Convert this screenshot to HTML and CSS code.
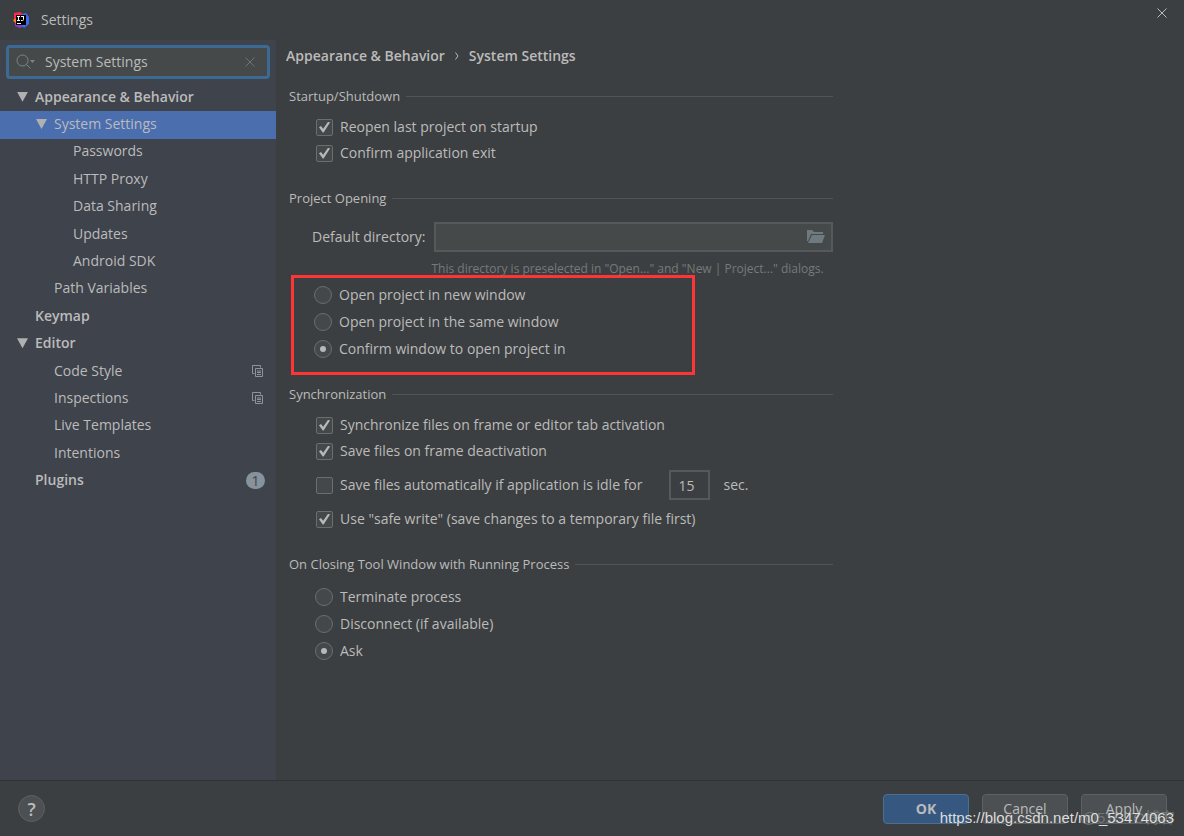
FILE: index.html
```html
<!DOCTYPE html>
<html lang="en">
<head>
<meta charset="utf-8">
<title>Settings</title>
<link rel="stylesheet" href="styles.css">
</head>
<body>
<div class="window">
  <header class="titlebar">
    <svg class="logo" viewBox="0 0 16 16" aria-hidden="true">
      <path fill="#fe2857" d="M1 1 7 0l4 3-3 9-7-2z"/>
      <path fill="#fc801d" d="M0 8l4-2 3 4-4 2z"/>
      <path fill="#9039d0" d="M2 11l6-2 4 4-5 3-5-2z"/>
      <path fill="#3c6cf0" d="M9 2l4-1 3 4v7l-5 4-3-3z"/>
      <path fill="#000" d="M3 3h10v10H3z"/>
      <path stroke="#fff" fill="none" d="M4 4.500h3M5.500 4.500v4M4 8.500h3M8 4.500h3M10.500 4.500v3q0 1-1 1H8M4 11.500h4"/>
    </svg>
    <h1 class="title">Settings</h1>
    <button class="close" aria-label="Close"><svg viewBox="0 0 10 10"><path d="M.5.5l9 9M9.500.5l-9 9"/></svg></button>
  </header>
  <div class="body">
    <aside class="sidebar">
      <div class="search">
        <svg class="search-icon" viewBox="0 0 20 16" aria-hidden="true"><circle cx="6.500" cy="6.500" r="5.500"/><path d="M10.500 10.500l4 4"/><path class="solid" d="M14 6h5l-2.500 3z"/></svg>
        <input class="search-input" type="text" aria-label="Search settings" value="System Settings">
        <button class="clear" aria-label="Clear"><svg viewBox="0 0 10 10"><path d="M.5.5l9 9M9.500.5l-9 9"/></svg></button>
      </div>
      <nav class="tree">
        <a href="#" class="node group"><i class="arrow"></i>Appearance &amp; Behavior</a>
        <a href="#" class="node level2 selected"><i class="arrow"></i>System Settings</a>
        <a href="#" class="node level3">Passwords</a>
        <a href="#" class="node level3">HTTP Proxy</a>
        <a href="#" class="node level3">Data Sharing</a>
        <a href="#" class="node level3">Updates</a>
        <a href="#" class="node level3">Android SDK</a>
        <a href="#" class="node level2">Path Variables</a>
        <a href="#" class="node group">Keymap</a>
        <a href="#" class="node group"><i class="arrow"></i>Editor</a>
        <a href="#" class="node level2">Code Style<svg class="copy" viewBox="0 0 12 12"><path d="M2.500 8.500h-2v-8h8v2M3.500 3.500h7v8h-7zM5 6h4M5 7.500h4M5 9.500h4"/></svg></a>
        <a href="#" class="node level2">Inspections<svg class="copy" viewBox="0 0 12 12"><path d="M2.500 8.500h-2v-8h8v2M3.500 3.500h7v8h-7zM5 6h4M5 7.500h4M5 9.500h4"/></svg></a>
        <a href="#" class="node level2">Live Templates</a>
        <a href="#" class="node level2">Intentions</a>
        <a href="#" class="node group">Plugins<span class="count">1</span></a>
      </nav>
    </aside>
    <main class="main">
      <div class="crumbs"><span>Appearance &amp; Behavior</span><svg class="chevron" viewBox="0 0 4 8"><path d="M.5.5l2.500 3.500-2.500 3.500"/></svg><span>System Settings</span></div>
      <section class="section startup">
        <h2 class="heading">Startup/Shutdown</h2>
        <div class="options">
          <label class="option"><input type="checkbox" checked>Reopen last project on startup</label>
          <label class="option"><input type="checkbox" checked>Confirm application exit</label>
        </div>
      </section>
      <section class="section">
        <h2 class="heading">Project Opening</h2>
        <div class="directory">
          <label for="dir">Default directory:</label>
          <div class="field">
            <input id="dir" type="text">
            <button class="browse" aria-label="Browse"><svg viewBox="0 0 18 14"><path d="M0 0h5l2 2h9v2H4L1 11H0z"/><path d="M5 5h13l-3 8H1z"/></svg></button>
          </div>
          <p class="hint">This directory is preselected in "Open..." and "New | Project..." dialogs.</p>
        </div>
        <div class="marked">
          <label class="option radio"><input type="radio" name="open">Open project in new window</label>
          <label class="option radio"><input type="radio" name="open">Open project in the same window</label>
          <label class="option radio"><input type="radio" name="open" checked>Confirm window to open project in</label>
        </div>
      </section>
      <section class="section sync">
        <h2 class="heading">Synchronization</h2>
        <div class="options">
          <label class="option"><input type="checkbox" checked>Synchronize files on frame or editor tab activation</label>
          <label class="option"><input type="checkbox" checked>Save files on frame deactivation</label>
          <div class="idle">
            <label class="option"><input type="checkbox">Save files automatically if application is idle for</label>
            <input class="seconds" type="text" value="15" aria-label="Idle seconds"><span>sec.</span>
          </div>
          <label class="option"><input type="checkbox" checked>Use "safe write" (save changes to a temporary file first)</label>
        </div>
      </section>
      <section class="section closing">
        <h2 class="heading">On Closing Tool Window with Running Process</h2>
        <div class="options">
          <label class="option radio"><input type="radio" name="closing">Terminate process</label>
          <label class="option radio"><input type="radio" name="closing">Disconnect (if available)</label>
          <label class="option radio"><input type="radio" name="closing" checked>Ask</label>
        </div>
      </section>
    </main>
  </div>
  <footer class="footer">
    <button class="help" aria-label="Help">?</button>
    <div class="actions">
      <button class="button primary">OK</button>
      <button class="button">Cancel</button>
      <button class="button">Apply</button>
    </div>
  </footer>
  <span class="stamp">@51CTO博客</span>
  <span class="watermark">https://blog.csdn.net/m0_53474063</span>
</div>
</body>
</html>
```
FILE: styles.css
```css
* { box-sizing: border-box; }
body {
  margin: 0;
  background: #3c3f41;
  color: #bbbbbb;
  font: 14px/20px "Open Sans", "Noto Sans", sans-serif;
}
button, input { font: inherit; color: inherit; }
button { padding: 0; border: 0; background: none; }
svg { display: block; fill: none; stroke: currentColor; }
a { color: inherit; text-decoration: none; }
h1, h2, p { margin: 0; font-weight: 400; }

.window { position: relative; display: flex; flex-direction: column; min-height: 100vh; }
.titlebar { display: flex; align-items: center; height: 40px; padding: 0 17px 0 13px; }
.logo { width: 16px; height: 16px; stroke: none; }
.title { flex: 1; margin-left: 12px; font-size: 14px; }
.close { align-self: flex-start; margin-top: 8px; }
.close svg, .clear svg { width: 10px; height: 10px; }

.body { flex: 1; display: flex; }
.sidebar { flex: 0 0 276px; background: #3f434c; }
.search {
  display: flex;
  align-items: center;
  height: 34px;
  margin: 5px 6px;
  padding: 0 12px 0 7px;
  border: 3px solid #3d6a94;
  border-radius: 4px;
  background: #45494a;
}
.search-icon { width: 20px; height: 16px; color: #7d8488; }
.solid { fill: currentColor; stroke: none; }
.search-input { flex: 1; min-width: 0; margin-left: 9px; padding: 0; border: 0; outline: 0; background: none; }
.clear { color: #6e7476; }

.tree { display: grid; grid-auto-rows: 1fr; min-height: 411px; }
.node { display: flex; align-items: center; padding: 0 12px 2px 35px; }
.group { font-weight: 600; }
.level2 { padding-left: 54px; }
.level3 { padding-left: 73px; }
.selected { background: #4b6eaf; }
.arrow {
  width: 11px;
  height: 10px;
  margin: 0 7px 0 -18px;
  background: #b0b0b0;
  clip-path: polygon(0 0, 100% 0, 50% 100%);
}
.copy { width: 12px; height: 12px; margin-left: auto; color: #8b959d; }
.count {
  width: 19px;
  margin: 0 -1px 0 auto;
  border-radius: 9px;
  background: #87939a;
  color: #3f434c;
  font-weight: 400;
  line-height: 17px;
  text-align: center;
}

.main { flex: 1; padding: 6px 10px; }
.crumbs { display: flex; align-items: center; gap: 10px; font-weight: 600; }
.chevron { width: 4px; height: 8px; }
.section { width: 100%; max-width: 547px; margin-top: 22px; padding-left: 3px; }
.startup { margin-top: 20px; }
.heading { display: flex; align-items: center; gap: 6px; font-size: 13px; }
.heading::after { content: ""; flex: 1; height: 1px; background: #515456; }
.options { margin: 8px 0 0 26px; }
.option { display: flex; align-items: center; height: 26px; gap: 7px; }
.radio { height: 27px; }
.option input { appearance: none; display: grid; place-items: center; flex: none; width: 17px; height: 17px; margin: 0 0 0 1px; border: 1px solid #6b6d6e; border-radius: 2px; background: #43494a; }
.option input[type="radio"] { width: 18px; height: 18px; margin: 0; border-radius: 50%; }
.option input[type="checkbox"]:checked::before {
  content: "";
  width: 11px;
  height: 11px;
  background: #b8b8b8;
  clip-path: polygon(0 52%, 18% 42%, 38% 66%, 84% 0, 100% 8%, 42% 100%, 34% 100%);
}
.option input[type="radio"]:checked::before { content: ""; width: 6px; height: 6px; border-radius: 50%; background: #b8b8b8; }

.directory { display: grid; grid-template-columns: auto 1fr; column-gap: 9px; align-items: center; margin: 14px 0 0 23px; }
.field { display: flex; align-items: center; height: 30px; padding-right: 6px; border: 2px solid #55595b; background: #45494a; }
.field input { flex: 1; min-width: 0; border: 0; outline: 0; background: none; }
.browse svg { width: 18px; height: 14px; fill: #6e7a80; stroke: none; }
.hint { grid-column: 2; margin: 11px -8px 0 -3px; color: #77797b; font-size: 12px; line-height: 12px; white-space: nowrap; }
.marked { width: 404px; max-width: 100%; margin-left: 2px; padding: 3px 0 10px 20px; border: 3px solid #ff3535; }
.sync { margin-top: 9px; }
.idle { display: flex; align-items: center; height: 42px; }
.seconds { width: 41px; height: 30px; margin: 0 13px 0 27px; padding: 0 7px; border: 2px solid #55595b; background: #3c3f41; }
.closing .options { margin-top: 9px; }

.footer { display: flex; align-items: center; justify-content: space-between; height: 56px; padding: 0 17px 0 18px; border-top: 1px solid #313435; }
.help { width: 27px; height: 27px; border: 1px solid #5e6062; border-radius: 50%; background: #4c5052; font-size: 18px; font-weight: 600; line-height: 24px; }
.actions { display: flex; gap: 13px; }
.button { width: 86px; height: 30px; border: 1px solid #5e6062; border-radius: 4px; background: #4c5052; }
.primary { border-color: #4c708c; background: #365880; font-weight: 700; }
.stamp { position: absolute; right: 9px; bottom: 8px; color: rgba(187, 187, 187, 0.35); font-family: "Liberation Sans", "Noto Sans CJK SC", sans-serif; font-size: 15px; }
.watermark { position: absolute; right: 10px; bottom: 8px; color: #dddddd; font-family: "Liberation Sans", sans-serif; font-size: 15px; }
```
